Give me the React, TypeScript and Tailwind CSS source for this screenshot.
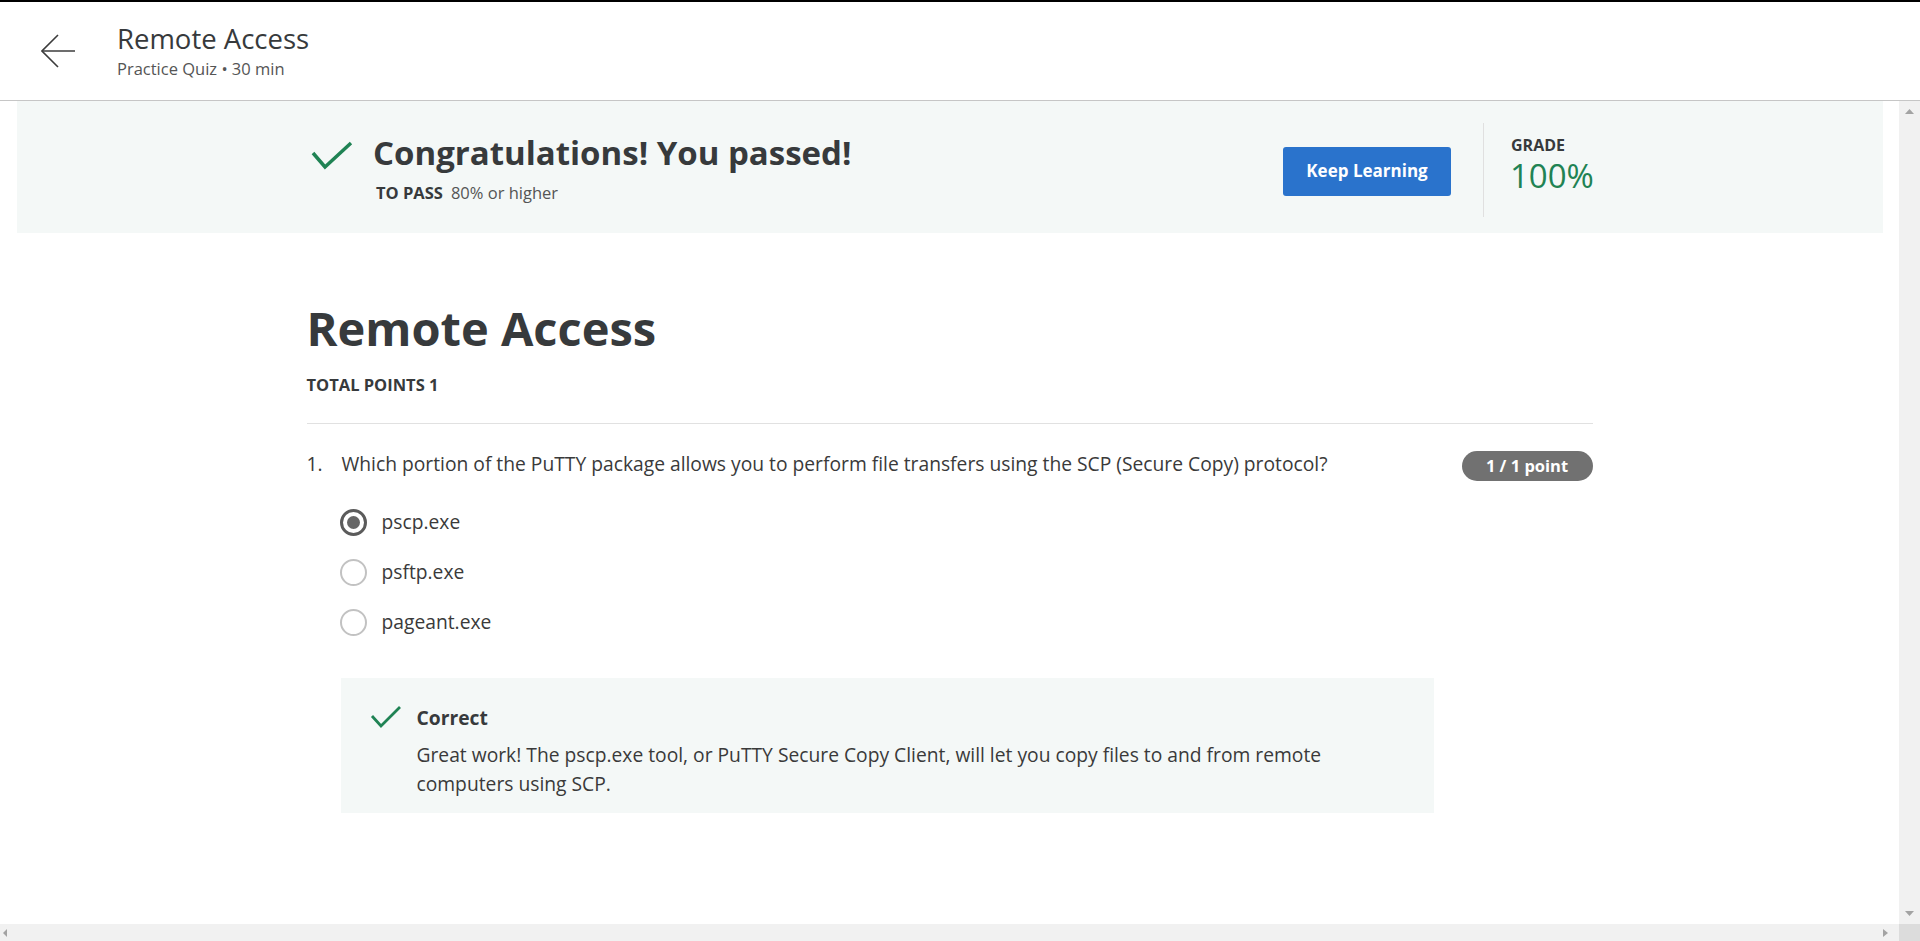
import React from 'react';

const options = [
  { label: 'pscp.exe', selected: true },
  { label: 'psftp.exe', selected: false },
  { label: 'pageant.exe', selected: false },
];

function Check({ className }: { className?: string }) {
  return (
    <svg className={className} viewBox="0 0 42 30" fill="none" stroke="#1f8354" strokeWidth={3.5} strokeLinecap="butt" strokeLinejoin="miter">
      <polyline points="2,12 14,26 40,2" />
    </svg>
  );
}

function SmallCheck({ className }: { className?: string }) {
  return (
    <svg className={className} viewBox="0 0 32 24" fill="none" stroke="#1f8354" strokeWidth={2.8}>
      <polyline points="2,11 11,21 30,2" />
    </svg>
  );
}

function Radio({ selected }: { selected: boolean }) {
  if (selected) {
    return (
      <span className="w-[27px] h-[27px] rounded-full border-[3px] border-[#5b5b5b] flex items-center justify-center shrink-0">
        <span className="w-[13px] h-[13px] rounded-full bg-[#666666]" />
      </span>
    );
  }
  return <span className="w-[27px] h-[27px] rounded-full border-2 border-[#c2c2c2] shrink-0" />;
}

export default function App() {
  return (
    <div
      className="h-[941px] w-full flex flex-col overflow-hidden bg-white text-[#373a3c]"
      style={{ fontFamily: '"Open Sans", "Noto Sans", Arial, sans-serif' }}
    >
      {/* header */}
      <header className="h-[101px] shrink-0 border-t-2 border-black border-b border-b-[#c6c6c6] flex items-center">
        <svg className="ml-[41px] w-[35px] h-[34px]" viewBox="0 0 35 34" fill="none" stroke="#3c3c3c" strokeWidth={1.6}>
          <path d="M17 1 L1 17 L17 33" />
          <path d="M1 17 H34" />
        </svg>
        <div className="ml-[41px] flex flex-col gap-[4px]">
          <h1 className="text-[27.5px] leading-[32px] text-[#373a3c]">Remote Access</h1>
          <p className="text-[16.5px] leading-[20px] text-[#555555]">Practice Quiz • 30 min</p>
        </div>
      </header>

      <div className="flex-1 flex min-h-0">
        <div className="flex-1 flex flex-col min-w-0">
          <main className="flex-1 min-h-0 overflow-hidden">
            {/* result banner */}
            <div className="ml-[17px] mr-[16px] h-[132px] bg-[#f4f8f7] flex items-center">
              <div className="w-[1286px] mx-auto flex items-center">
                <div className="flex items-start flex-1">
                  <Check className="w-[42px] h-[30px] ml-[4px] mt-[10px]" />
                  <div className="ml-[20px] flex flex-col gap-[7px]">
                    <h2 className="text-[33px] leading-[44px] font-bold text-[#373a3c]">Congratulations! You passed!</h2>
                    <p className="text-[16.5px] leading-[22px] ml-[3px]">
                      <span className="font-bold text-[#373a3c]">TO PASS</span>
                      <span className="ml-[8px] text-[#555555]">80% or higher</span>
                    </p>
                  </div>
                </div>
                <button className="mt-[8px] w-[168px] h-[49px] rounded-[3px] bg-[#2a73cc] text-white text-[17px] font-bold">
                  Keep Learning
                </button>
                <div className="ml-[32px] mt-[5px] w-px h-[94px] bg-[#e0e0e0]" />
                <div className="ml-[27px] w-[82px] flex flex-col mb-[2px]">
                  <span className="text-[16px] leading-[20px] font-bold text-[#373a3c]">GRADE</span>
                  <span className="text-[33px] leading-[42px] text-[#1f8354] -ml-[1px]">100%</span>
                </div>
              </div>
            </div>

            {/* quiz */}
            <section className="w-[1286px] mx-auto">
              <h1 className="mt-[65px] text-[47px] leading-[60px] font-bold text-[#373a3c]">Remote Access</h1>
              <p className="mt-[16px] text-[16.5px] leading-[22px] font-bold text-[#373a3c]">TOTAL POINTS 1</p>
              <div className="mt-[27px] border-t border-[#e1e1e1]" />

              <div className="mt-[27px] flex items-start">
                <span className="w-[35px] text-[19.25px] leading-[25px] text-[#3a3a3a]">1.</span>
                <p className="flex-1 text-[19.25px] leading-[25px] text-[#3a3a3a]">
                  Which portion of the PuTTY package allows you to perform file transfers using the SCP (Secure Copy) protocol?
                </p>
                <span className="h-[30px] w-[131px] rounded-full bg-[#717171] text-white text-[16.5px] font-bold flex items-center justify-center">
                  1 / 1 point
                </span>
              </div>

              <div className="mt-[16px] ml-[33px] flex flex-col">
                {options.map((o) => (
                  <label key={o.label} className="h-[50px] flex items-center gap-[15px]">
                    <Radio selected={o.selected} />
                    <span className="text-[19.25px] text-[#3a3a3a]">{o.label}</span>
                  </label>
                ))}
              </div>

              <div className="mt-[31px] ml-[34px] w-[1093px] bg-[#f4f8f7] pt-[27px] pb-[15px] pl-[29px] flex items-start">
                <SmallCheck className="w-[32px] h-[24px] shrink-0" />
                <div className="ml-[15px] max-w-[960px]">
                  <p className="text-[19.25px] leading-[25px] font-bold text-[#373a3c]">Correct</p>
                  <p className="mt-[10px] text-[19.25px] leading-[29px] text-[#3a3a3a]">
                    Great work! The pscp.exe tool, or PuTTY Secure Copy Client, will let you copy files to and from remote computers using SCP.
                  </p>
                </div>
              </div>
            </section>
          </main>

          {/* horizontal scrollbar */}
          <div className="h-[17px] shrink-0 bg-[#f1f1f1] flex items-center justify-between px-[3px]">
            <svg className="w-[4px] h-[8px]" viewBox="0 0 4 8">
              <polygon points="4,0 0,4 4,8" fill="#a3a3a3" />
            </svg>
            <svg className="w-[5px] h-[8px] mr-[8px]" viewBox="0 0 5 8">
              <polygon points="0,0 5,4 0,8" fill="#a3a3a3" />
            </svg>
          </div>
        </div>

        {/* vertical scrollbar */}
        <div className="w-[21px] shrink-0 flex flex-col">
          <div className="flex-1 bg-[#f1f1f1] flex flex-col items-center justify-between py-[8px]">
            <svg className="w-[9px] h-[5px]" viewBox="0 0 9 5">
              <polygon points="0,5 4.5,0 9,5" fill="#a3a3a3" />
            </svg>
            <svg className="w-[9px] h-[5px]" viewBox="0 0 9 5">
              <polygon points="0,0 9,0 4.5,5" fill="#a3a3a3" />
            </svg>
          </div>
          <div className="h-[17px] bg-[#dcdcdc]" />
        </div>
      </div>
    </div>
  );
}
